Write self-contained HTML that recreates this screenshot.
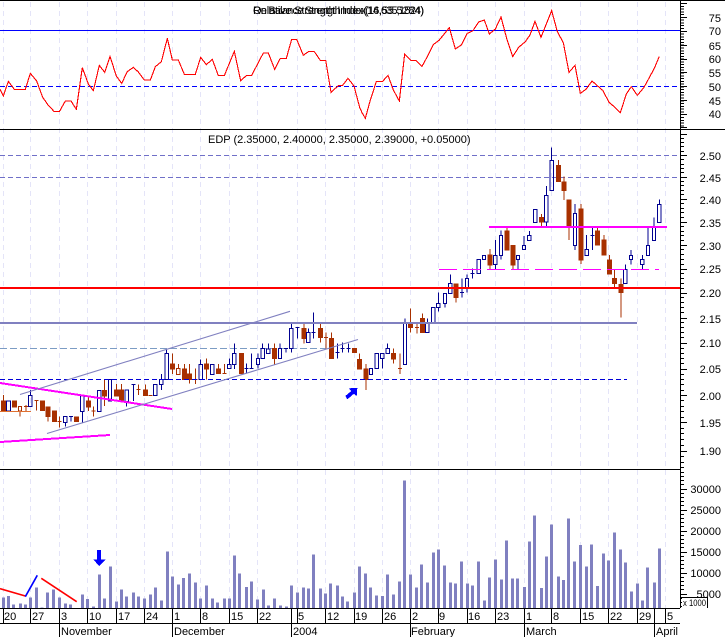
<!DOCTYPE html>
<html><head><meta charset="utf-8"><style>
html,body{margin:0;padding:0;background:#fff}
svg{display:block}
text{font-family:"Liberation Sans",sans-serif;font-size:11px;fill:#000}
</style></head><body>
<svg width="725" height="637" viewBox="0 0 725 637" xmlns="http://www.w3.org/2000/svg">
<rect width="725" height="637" fill="#fff"/>
<!-- vertical grid -->
<g shape-rendering="crispEdges">
<path fill="none" stroke="#e4e4f8" stroke-dasharray="5 4" d="M3.5 2V608M30.5 2V608M59.5 2V608M87.5 2V608M116.5 2V608M144.5 2V608M172.5 2V608M200.5 2V608M229.5 2V608M257.5 2V608M297.5 2V608M325.5 2V608M354.5 2V608M382.5 2V608M410.5 2V608M438.5 2V608M467.5 2V608M495.5 2V608M524.5 2V608M551.5 2V608M580.5 2V608M608.5 2V608M637.5 2V608M665.5 2V608"/>
<!-- RSI guide lines -->
<path stroke="#0000ff" d="M0 30.5H680"/>
<path stroke="#0000ff" stroke-dasharray="5 3" d="M0 86.5H680"/>
<!-- price dashed lines -->
<path stroke="#7070c8" stroke-dasharray="5 3" d="M0 155.5H680M0 177.5H680"/>
<path stroke="#7c9cc4" stroke-dasharray="7 3" d="M0 348.5H326"/>
</g>

<!-- candles -->
<g fill="none" stroke-width="3" shape-rendering="crispEdges">
<g transform="translate(0,300) scale(.33333)">
<path stroke="#a83000" fill="#a83000" d="M10 285V303M4 303h12v30h-12zM37 303h12v18h-12zM122 303h12v29h-12zM138 321h12v29h-12zM144 350V365M157 333h12v32h-12zM223 351h12v14h-12zM259 303h12v18h-12zM265 286V333M308 271h12v17h-12zM314 240V318M343 270h12v18h-12zM349 252V270M359 270h12v33h-12zM365 252V305M430 270h12v17h-12zM436 253V270M512 192h12v15h-12zM518 160V222M547 207h12v31h-12zM553 192V207M563 222h12v16h-12zM569 192V250M613 192h12v15h-12zM619 175V238M649 207h12v14h-12zM655 192V207M72 319H84M78 315V335M104 301H116M110 301V332M172 365H184M178 350V383M274 333H286M280 320V350M409 268H421M415 253V285M446 287H458M580 238H592M586 205V252M667 220H679M673 192V220"/>
<path stroke="#a83000" d="M55 319h10v14h-10zM60 333V350M530 205h10v18h-10zM535 192V205"/>
<path stroke="#000090" stroke-width="3" d="M19 303h12v30h-12zM86 286h10v33h-10zM91 270V286M191 350h10v17h-10zM196 367V380M242 286h10v48h-10zM247 334V367M293 271h10v63h-10zM325 238h10v65h-10zM375 270h10v35h-10zM380 305V320M461 253h10v34h-10zM479 238h10v15h-10zM484 222V238M484 253V270M495 160h10v78h-10zM500 148V160M597 193h10v45h-10zM602 178V193M632 193h10v30h-10zM683 193h10v12h-10zM688 175V193M698 160h10v33h-10zM703 130V160M703 193V207M207 350H219M213 350V365M394 253H406M400 253V303"/>
</g>
<g transform="translate(230,300) scale(.33333)">
<path stroke="#a83000" fill="#a83000" d="M28 160h12v60h-12zM127 145h12v30h-12zM133 130V193M216 85h12v30h-12zM222 70V130M265 85h12v28h-12zM271 70V128M282 113H294M288 97V145M298 115h12v60h-12zM304 97V115M367 145h12v13h-12zM382 178h12v29h-12zM388 160V178M402 207h12v31h-12zM408 192V270M484 160h12v17h-12zM490 145V190M504 205H516M510 160V222M535 70h12v13h-12zM541 25V98M555 83H567M561 68V100M571 55h12v43h-12zM577 40V55"/>
<path stroke="#000090" stroke-width="3" d="M44 205H56M50 190V220M59 205H71M65 160V205M79 175h10v18h-10zM84 160V175M84 193V205M93 145h10v30h-10zM98 130V145M110 147h10v13h-10zM115 130V147M145 145h10v30h-10zM150 130V145M162 145H174M168 145V158M179 85h10v60h-10zM184 70V85M184 145V158M196 83H208M202 83V115M230 97h10v30h-10zM235 85V97M244 98H256M250 37V115M316 157H328M322 130V175M332 145H344M338 128V158M349 145H361M355 130V158M418 205h10v18h-10zM435 160h10v45h-10zM452 160h10v15h-10zM457 175V205M468 145h10v15h-10zM473 130V145M520 70h10v123h-10zM525 55V70M587 70h10v27h-10zM592 55V70"/>
</g>
<g transform="translate(430,140) scale(.33333)">
<path stroke="#a83000" fill="#a83000" d="M72 432h12v41h-12zM78 473V488M174 345h12v30h-12zM180 327V388M225 273h12v57h-12zM231 262V273M243 316h12v59h-12zM249 375V388M328 232h12v14h-12zM334 222V260M379 76h12v49h-12zM385 60V76M396 126h12v26h-12zM402 110V180M411 180h12v78h-12zM417 258V300M447 207h12v153h-12zM453 192V372M496 273h12v42h-12zM502 262V273M516 300h12v45h-12zM522 285V300M532 360h12v42h-12zM538 345V360M547 415h12v16h-12zM553 388V445M567 433h12v25h-12zM573 415V533"/>
<path stroke="#000090" stroke-width="3" d="M5 502h10v45h-10zM20 490h10v12h-10zM25 457V490M25 502V515M40 460h10v30h-10zM45 490V503M56 430h10v30h-10zM61 403V430M90 457H102M96 415V473M106 415h10v30h-10zM111 403V415M111 445V458M122 400H134M128 385V415M141 358h10v42h-10zM157 346h10v12h-10zM191 346h10v27h-10zM196 300V346M196 373V388M208 286h10v60h-10zM213 272V286M213 346V358M259 346h10v12h-10zM264 358V388M277 316h10v12h-10zM282 288V316M293 287h10v14h-10zM298 273V287M311 208h10v40h-10zM344 166h10v80h-10zM349 138V166M349 246V258M360 61h10v91h-10zM365 22V61M430 220h10v96h-10zM435 192V220M435 316V330M465 328h10v19h-10zM470 285V328M481 286H493M487 262V330M581 388h10v43h-10zM586 373V388M598 347h10v11h-10zM603 330V347M603 358V373M632 358h10v15h-10zM637 345V358M637 373V388M649 316h10v30h-10zM654 262V316M667 262h10v40h-10zM672 232V262M683 193h10v54h-10zM688 178V193"/>
</g>
</g>

<!-- price lines over candles -->
<g shape-rendering="crispEdges">
<path stroke="#0000d8" stroke-dasharray="5 3" d="M0 379.5H627"/>
<path stroke="#e07030" d="M0 411.5H31"/>
<path stroke="#8080c0" stroke-width="2" d="M0 323H637"/>
<path stroke="#ff0000" stroke-width="2" d="M0 288H680"/>
<path stroke="#ff00ff" stroke-width="2" d="M489 227H667"/>
<path stroke="#ff00ff" d="M439 269.5h18M463 269.5h18M487 269.5h18M511 269.5h18M535 269.5h18M559 269.5h18M583 269.5h18M607 269.5h18M631 269.5h18M655 269.5h4"/>
<path stroke="#ff00ff" stroke-width="2" fill="none" d="M0 383L172 409M0 442L110 435"/>
</g>
<path stroke="#8080c0" stroke-width="1.1" fill="none" d="M20 394.5L290 311.3M47 433.5L358 339.5"/>
<polygon fill="#0000ff" shape-rendering="crispEdges" transform="translate(230,300) scale(.33333)" points="382,264 356,265 364,273 346,288 352,298 372,281 380,289"/>

<!-- RSI line -->
<g fill="none" stroke="#ff0000" stroke-width="3.3" shape-rendering="crispEdges">
<polyline transform="scale(.33333)" points="0,268 10,288 25,244 43,268 76,268 91,220 110,243 128,292 145,316 163,335 178,335 196,303 213,303 229,328 247,203 265,252 280,272 298,196 314,217 330,169 349,228 365,250 382,215 400,202 415,216 433,240 451,240 466,200 484,185 502,115 517,180 535,180 553,223 586,223 602,172 619,194 637,178 655,227 673,227 688,190 703,154 722,242 740,226 755,226 790,159 805,159 824,208 841,175 859,175 875,118 890,118 910,166 925,155 943,155 961,181 977,181 993,277 1015,257 1027,257 1044,235 1062,258 1079,322 1086,338"/>
<polyline transform="translate(362,0) scale(.33333)" points="0,338 10,355 25,300 43,245 61,245 78,226 94,270 112,303 128,162 146,181 162,181 180,199 196,170 214,134 232,120 262,83 280,147 298,135 316,100 333,92 350,66 367,60 382,102 400,87 417,51 434,115 452,170 470,142 490,125 504,105 519,64 537,112 569,32 586,95 604,128 621,217 639,196 655,280 672,268 690,243 723,272 741,307 759,322 775,338 793,282 808,260 826,286 846,262 877,205 892,169"/>
</g>

<!-- volume -->
<g fill="none" stroke="#8080c0" stroke-width="9" shape-rendering="crispEdges">
<path transform="translate(0,470) scale(.33333)" d="M10 414V382M25 414V378M40 414V403M61 414V400M76 414V404M91 414V382M109 414V352M126 414V412M142 414V368M160 414V358M178 414V382M196 414V401M211 414V403M247 414V373M262 414V387M280 414V409M298 414V314M313 414V386M331 414V289M349 414V395M364 414V359M379 414V379M400 414V367M415 414V380M433 414V385M451 414V373M466 414V353M484 414V392M502 414V244M517 414V320M535 414V343M550 414V324M568 414V310M586 414V337M601 414V385M619 414V346M637 414V386M652 414V398M673 414V385M688 414V386M703 414V257M718 414V310"/>
<path transform="translate(240,470) scale(.33333)" d="M19 414V351M34 414V335M52 414V388M70 414V359M85 414V407M103 414V385M121 414V406M139 414V409M154 414V347M172 414V367M190 414V353M205 414V356M220 414V253M241 414V356M256 414V371M271 414V340M292 414V346M307 414V380M322 414V395M343 414V367M358 414V290M376 414V311M391 414V352M409 414V376M427 414V378M442 414V313M460 414V373M478 414V335M493 414V32M511 414V313M529 414V353M544 414V284M562 414V337M580 414V248M595 414V238M613 414V286M631 414V337M646 414V340M664 414V274M682 414V340M697 414V347M715 414V274"/>
<path transform="translate(480,470) scale(.33333)" d="M13 414V392M28 414V323M46 414V268M64 414V328M79 414V212M97 414V326M112 414V325M133 414V351M148 414V215M163 414V136M184 414V354M199 414V260M214 414V163M235 414V319M250 414V330M265 414V146M283 414V274M301 414V225M319 414V290M334 414V223M352 414V348M370 414V251M385 414V271M403 414V187M421 414V239M436 414V278M454 414V364M472 414V341M487 414V392M502 414V292M523 414V337M538 414V236"/>
</g>
<g fill="none" stroke-width="1.6">
<path stroke="#ff0000" d="M0 588.7L25.3 596M41.3 578.3L76.7 601.7"/>
<path stroke="#0000ff" d="M25.3 596.7L37.3 575.3"/>
</g>
<polygon fill="#0000ff" shape-rendering="crispEdges" transform="translate(0,470) scale(.33333)" points="291,240 303,240 303,268 317,268 298,288 279,268 291,268"/>

<!-- frame and axis -->
<g shape-rendering="crispEdges" fill="none" stroke="#000">
<path d="M0 .5H725M0 129.5H725M0 469.5H680M0 608.5H680M0 623.5H680M680.5 0V608"/>
<path d="M3.5 608V623M30.5 608V623M59.5 608V637M87.5 608V623M116.5 608V623M144.5 608V623M172.5 608V637M200.5 608V623M229.5 608V623M257.5 608V623M291.5 608V637M297.5 608V623M325.5 608V623M354.5 608V623M382.5 608V623M410.5 608V637M438.5 608V623M467.5 608V623M495.5 608V623M524.5 608V637M551.5 608V623M580.5 608V623M608.5 608V623M637.5 608V623M654.5 608V637M665.5 608V623"/>
<line x1="682.5" x2="682.5" y1="3" y2="128" stroke-width="3" stroke-dasharray="1 1.78"/>
<path d="M681 3.5h6M681 17.5h6M681 31.5h6M681 45.5h6M681 59.5h6M681 72.5h6M681 86.5h6M681 100.5h6M681 114.5h6M681 127.5h6"/>
<path d="M681 134.5h6M681 155.5h6M681 177.5h6M681 199.5h6M681 222.5h6M681 245.5h6M681 269.5h6M681 293.5h6M681 318.5h6M681 343.5h6M681 369.5h6M681 395.5h6M681 422.5h6M681 451.5h6"/>
<path d="M681 138.5h3M681 142.5h3M681 146.5h3M681 151.5h3M681 159.5h3M681 164.5h3M681 168.5h3M681 172.5h3M681 181.5h3M681 185.5h3M681 190.5h3M681 194.5h3M681 203.5h3M681 208.5h3M681 212.5h3M681 217.5h3M681 226.5h3M681 231.5h3M681 235.5h3M681 240.5h3M681 249.5h3M681 254.5h3M681 259.5h3M681 264.5h3M681 273.5h3M681 278.5h3M681 283.5h3M681 288.5h3M681 297.5h3M681 302.5h3M681 307.5h3M681 312.5h3M681 322.5h3M681 327.5h3M681 332.5h3M681 337.5h3M681 348.5h3M681 353.5h3M681 358.5h3M681 363.5h3M681 374.5h3M681 379.5h3M681 384.5h3M681 390.5h3M681 400.5h3M681 406.5h3M681 411.5h3M681 417.5h3M681 428.5h3M681 433.5h3M681 439.5h3M681 445.5h3M681 456.5h3M681 462.5h3M681 467.5h3"/>
<path d="M681 489.5h6M681 510.5h6M681 531.5h6M681 552.5h6M681 573.5h6M681 594.5h6"/>
<path d="M681 472.5h3M681 476.5h3M681 480.5h3M681 484.5h3M681 493.5h3M681 497.5h3M681 501.5h3M681 505.5h3M681 514.5h3M681 518.5h3M681 522.5h3M681 526.5h3M681 535.5h3M681 539.5h3M681 543.5h3M681 547.5h3M681 556.5h3M681 560.5h3M681 564.5h3M681 568.5h3M681 577.5h3M681 581.5h3M681 585.5h3M681 589.5h3M681 598.5h3M681 602.5h3M681 606.5h3"/>
</g>

<!-- titles -->
<text x="253" y="14" textLength="171" lengthAdjust="spacing">On Balance Strength Index(16,635,1524)</text>
<text x="253" y="14" textLength="171" lengthAdjust="spacing">Relative Strength Index(14,55.5284)</text>
<text x="208" y="143">EDP (2.35000, 2.40000, 2.35000, 2.39000, +0.05000)</text>

<!-- axis labels -->
<g text-anchor="end">
<text x="721" y="22">75</text><text x="721" y="35">70</text><text x="721" y="50">65</text><text x="721" y="63">60</text><text x="721" y="77">55</text><text x="721" y="91">50</text><text x="721" y="105">45</text><text x="721" y="118">40</text>
<text x="721" y="160">2.50</text><text x="721" y="182">2.45</text><text x="721" y="204">2.40</text><text x="721" y="227">2.35</text><text x="721" y="250">2.30</text><text x="721" y="273">2.25</text><text x="721" y="297">2.20</text><text x="721" y="323">2.15</text><text x="721" y="347">2.10</text><text x="721" y="373">2.05</text><text x="721" y="400">2.00</text><text x="721" y="427">1.95</text><text x="721" y="455">1.90</text>
<text x="721" y="493">30000</text><text x="721" y="514">25000</text><text x="721" y="535">20000</text><text x="721" y="556">15000</text><text x="721" y="577">10000</text><text x="721" y="598">5000</text>
</g>
<rect x="682" y="598" width="25" height="10" fill="#fff"/>
<path d="M681 597.5H707.5V608" fill="none" stroke="#000" shape-rendering="crispEdges"/>
<text x="683" y="606" textLength="23" lengthAdjust="spacingAndGlyphs" style="font-size:9px">x 1000</text>

<!-- date labels -->
<g>
<text x="4" y="620">20</text><text x="32" y="620">27</text><text x="61" y="620">3</text><text x="89" y="620">10</text><text x="118" y="620">17</text><text x="146" y="620">24</text><text x="174" y="620">1</text><text x="202" y="620">8</text><text x="231" y="620">15</text><text x="259" y="620">22</text><text x="298" y="620">5</text><text x="327" y="620">12</text><text x="355" y="620">19</text><text x="384" y="620">26</text><text x="412" y="620">2</text><text x="439" y="620">9</text><text x="468" y="620">16</text><text x="497" y="620">23</text><text x="526" y="620">1</text><text x="553" y="620">8</text><text x="582" y="620">15</text><text x="610" y="620">22</text><text x="639" y="620">29</text><text x="667" y="620">5</text>
<text x="61" y="635">November</text><text x="174" y="635">December</text><text x="293" y="635">2004</text><text x="411" y="635">February</text><text x="526" y="635">March</text><text x="656" y="635">April</text>
</g>
</svg>
</body></html>
